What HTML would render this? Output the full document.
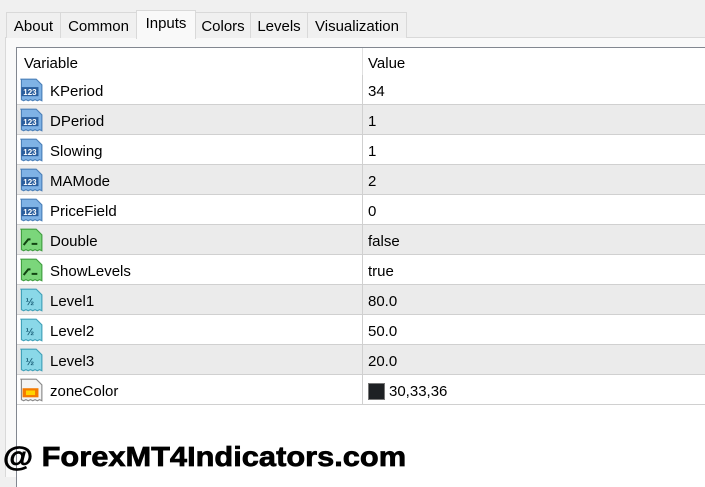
<!DOCTYPE html>
<html><head><meta charset="utf-8"><style>
*{margin:0;padding:0;box-sizing:border-box}
body{width:705px;height:473px;background:#f0f0f0;font-family:"Liberation Sans",sans-serif;position:relative;overflow:hidden;color:#000}
.tab{position:absolute;top:12px;height:26px;border:1px solid #d9d9d9;border-bottom:none;background:#f0f0f0;font-size:15px;padding-top:5px;text-align:center}
.tab.sel{top:10px;height:29px;background:#f9f9f9;z-index:2;padding-top:4px}
.panel{position:absolute;left:5px;top:37px;width:710px;height:440px;background:#f9f9f9;border-top:1px solid #d9d9d9;border-left:1px solid #d9d9d9}
.tbl{position:absolute;left:16px;top:47px;width:700px;height:440px;background:#fff;border-left:1px solid #828790;border-top:1px solid #828790}
.row{position:absolute;left:17px;width:700px;height:30px;border-bottom:1px solid #d0d0d0;font-size:15px}
.row.g{background:#ebebeb}
.row .n{position:absolute;left:33px;top:8px}
.row .v{position:absolute;left:351px;top:8px}
.row .d{position:absolute;left:345px;top:0;width:1px;height:30px;background:#d0d0d0}
.row svg{position:absolute;left:1px;top:3px}
.hdr{position:absolute;left:17px;top:48px;width:700px;height:27px;font-size:15px}
.wm{position:absolute;left:3px;top:441px;font-size:28px;font-weight:bold;transform:scaleX(1.1);transform-origin:0 0;white-space:nowrap;-webkit-text-stroke:0.7px #000}
</style></head><body>
<div class="panel"></div>
<div class="tab" style="left:6px;width:55px">About</div>
<div class="tab" style="left:60px;width:77px">Common</div>
<div class="tab sel" style="left:136px;width:60px">Inputs</div>
<div class="tab" style="left:195px;width:56px">Colors</div>
<div class="tab" style="left:250px;width:58px">Levels</div>
<div class="tab" style="left:307px;width:100px">Visualization</div>
<div class="tbl"></div>
<div class="hdr"><span style="position:absolute;left:7px;top:7px">Variable</span><div style="position:absolute;left:345px;top:0;width:1px;height:27px;background:#e0e0e0"></div><span style="position:absolute;left:351px;top:7px">Value</span></div>
<svg width="0" height="0" style="position:absolute">
<defs>
<g id="i123"><path d="M2 1h14l5 5v14l-2-1-2 1-2-1-2 1-2-1-2 1-2-1-2 1-2-1V1z" fill="#7fb2e5" stroke="#4a7fb8"/><rect x="3" y="8" width="15" height="8" fill="#2b5f9e"/><text x="10.5" y="15" font-size="7" font-weight="bold" fill="#fff" text-anchor="middle" font-family="Liberation Sans">123</text></g>
<g id="ibool"><path d="M2 1h14l5 5v14l-2-1-2 1-2-1-2 1-2-1-2 1-2-1-2 1-2-1V1z" fill="#7bd67b" stroke="#3f9e3f"/><path d="M5 15l4-5h2M12 14h5" stroke="#114411" stroke-width="1.8" fill="none"/></g>
<g id="ihalf"><path d="M2 1h14l5 5v14l-2-1-2 1-2-1-2 1-2-1-2 1-2-1-2 1-2-1V1z" fill="#8ad8e8" stroke="#3fa0b8"/><text x="10.5" y="15" font-size="9" font-weight="bold" fill="#1b5f78" text-anchor="middle" font-family="Liberation Sans">½</text></g>
<g id="icol"><path d="M2 1h14l5 5v14l-2-1-2 1-2-1-2 1-2-1-2 1-2-1-2 1-2-1V1z" fill="#f4f4f4" stroke="#888"/><rect x="4" y="9" width="14" height="8" fill="#f47a00"/><rect x="7" y="11" width="8" height="4" fill="#ffd400"/></g>
</defs></svg>
<div class="row" style="top:75px"><svg width="25" height="25" viewBox="0 0 22 22"><use href="#i123"/></svg><span class="n">KPeriod</span><div class="d"></div><span class="v">34</span></div>
<div class="row g" style="top:105px"><svg width="25" height="25" viewBox="0 0 22 22"><use href="#i123"/></svg><span class="n">DPeriod</span><div class="d"></div><span class="v">1</span></div>
<div class="row" style="top:135px"><svg width="25" height="25" viewBox="0 0 22 22"><use href="#i123"/></svg><span class="n">Slowing</span><div class="d"></div><span class="v">1</span></div>
<div class="row g" style="top:165px"><svg width="25" height="25" viewBox="0 0 22 22"><use href="#i123"/></svg><span class="n">MAMode</span><div class="d"></div><span class="v">2</span></div>
<div class="row" style="top:195px"><svg width="25" height="25" viewBox="0 0 22 22"><use href="#i123"/></svg><span class="n">PriceField</span><div class="d"></div><span class="v">0</span></div>
<div class="row g" style="top:225px"><svg width="25" height="25" viewBox="0 0 22 22"><use href="#ibool"/></svg><span class="n">Double</span><div class="d"></div><span class="v">false</span></div>
<div class="row" style="top:255px"><svg width="25" height="25" viewBox="0 0 22 22"><use href="#ibool"/></svg><span class="n">ShowLevels</span><div class="d"></div><span class="v">true</span></div>
<div class="row g" style="top:285px"><svg width="25" height="25" viewBox="0 0 22 22"><use href="#ihalf"/></svg><span class="n">Level1</span><div class="d"></div><span class="v">80.0</span></div>
<div class="row" style="top:315px"><svg width="25" height="25" viewBox="0 0 22 22"><use href="#ihalf"/></svg><span class="n">Level2</span><div class="d"></div><span class="v">50.0</span></div>
<div class="row g" style="top:345px"><svg width="25" height="25" viewBox="0 0 22 22"><use href="#ihalf"/></svg><span class="n">Level3</span><div class="d"></div><span class="v">20.0</span></div>
<div class="row" style="top:375px"><svg width="25" height="25" viewBox="0 0 22 22"><use href="#icol"/></svg><span class="n">zoneColor</span><div class="d"></div><span style="position:absolute;left:351px;top:8px;width:17px;height:17px;background:#1e2124;border:1px solid #777"></span><span class="v" style="left:372px">30,33,36</span></div>
<div class="wm">@ ForexMT4Indicators.com</div>
</body></html>
